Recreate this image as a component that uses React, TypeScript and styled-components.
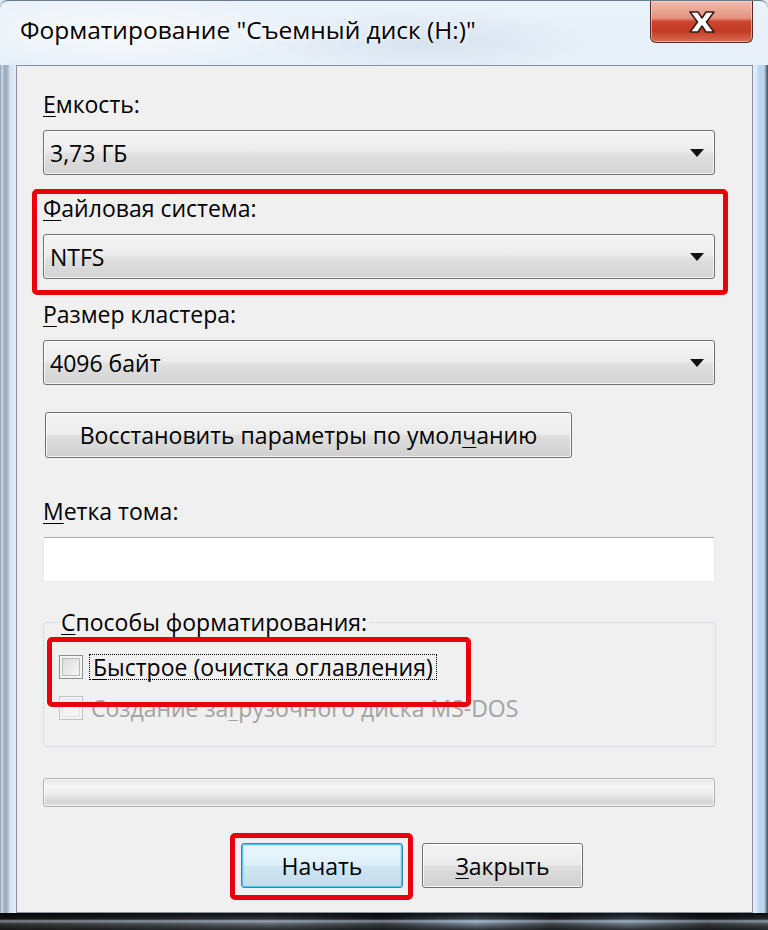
import React from "react";
import styled, { createGlobalStyle } from "styled-components";

const GlobalStyle = createGlobalStyle`
  html, body { margin: 0; padding: 0; background: #dbe7f3; }
  body { font-family: "Open Sans", "Noto Sans", sans-serif; }
  #root { width: 768px; height: 930px; }
`;

const Window = styled.div`
  width: 768px;
  height: 930px;
  box-sizing: border-box;
  display: flex;
  flex-direction: column;
  border-top: 1px solid #6a7a8a;
  border-radius: 8px 8px 0 0;
  overflow: hidden;
  background: linear-gradient(180deg, #e9f1f9 0%, #dde9f5 40%, #d2e1f0 100%);
  font-family: "Open Sans", "Noto Sans", sans-serif;
  color: #000;
`;

const TitleBar = styled.div`
  height: 64px;
  flex: none;
  display: flex;
  align-items: flex-start;
  justify-content: space-between;
  padding: 0 15px 0 20px;
  background:
    radial-gradient(ellipse 180px 40px at 120px 30px, rgba(255,255,255,0.7), rgba(255,255,255,0) 100%),
    radial-gradient(ellipse 160px 30px at 430px 40px, rgba(180,200,220,0.35), rgba(180,200,220,0) 100%);
`;

const Title = styled.div`
  font-size: 24.5px;
  line-height: 28px;
  margin-top: 15px;
  white-space: nowrap;
  text-shadow: 0 0 8px rgba(255,255,255,0.95), 0 0 3px rgba(255,255,255,0.9);
`;

const CloseButton = styled.div`
  width: 103px;
  height: 42px;
  box-sizing: border-box;
  border: 1px solid #5a2a22;
  border-top: none;
  border-radius: 0 0 6px 6px;
  background: linear-gradient(180deg, #f0bcaf 0%, #e3927e 42%, #cc462f 50%, #c23a24 72%, #d96c52 100%);
  box-shadow: inset 0 0 0 1px rgba(255, 220, 210, 0.55);
  display: flex;
  align-items: center;
  justify-content: center;
`;

const Middle = styled.div`
  flex: 1;
  display: flex;
  min-height: 0;
`;

const LeftFrame = styled.div`
  width: 16px;
  flex: none;
  background: linear-gradient(90deg, #6f7e8d 0, #c9d7e4 1px, #b8c7d6 3px, #95a8bb 5px, #a9bccd 8px, #d6e3f0 10px, #e3edf7 100%);
`;

const RightFrame = styled.div`
  width: 15px;
  flex: none;
  background: linear-gradient(90deg, #e7eff8 0, #d8e7f5 4px, #b8d4ee 6px, #bad6f0 11px, #7d8fa0 13px, #3f4a55 15px);
`;

const Client = styled.div`
  flex: 1;
  box-sizing: border-box;
  border: 1px solid #8593a2;
  background: #f0f0f0;
  padding: 25px 37px 0 26px;
  display: flex;
  flex-direction: column;
  align-items: stretch;
`;

const BottomFrame = styled.div`
  height: 17px;
  flex: none;
  background:
    linear-gradient(180deg, rgba(0,0,0,0.85) 0, rgba(0,0,0,0.55) 6px, rgba(200,215,230,0.55) 8px, rgba(60,60,60,0.3) 11px, rgba(20,20,20,0.8) 17px),
    linear-gradient(90deg, #2a2a2a 0, #4a4f55 20%, #6b7783 35%, #30343a 50%, #8aa2b8 62%, #3a4048 72%, #7c90a3 82%, #2b2e33 92%, #50585f 100%);
`;

const Label = styled.div<{ $mt?: number }>`
  height: 26px;
  font-size: 23px;
  line-height: 26px;
  margin-top: ${(p) => p.$mt ?? 0}px;
  white-space: nowrap;
`;

const Mn = styled.span`
  text-decoration: underline;
  text-decoration-thickness: 1px;
  text-underline-offset: 3px;
`;

const Combo = styled.div<{ $mt?: number }>`
  height: 45px;
  box-sizing: border-box;
  margin-top: ${(p) => p.$mt ?? 13}px;
  border: 1px solid #707070;
  border-radius: 3px;
  background: linear-gradient(180deg, #f4f4f4 0%, #ededed 46%, #e0e0e0 54%, #d2d2d2 100%);
  box-shadow: inset 0 0 0 1px rgba(255, 255, 255, 0.75);
  display: flex;
  align-items: center;
  justify-content: space-between;
  padding: 0 10px 0 6px;
  font-size: 23px;
`;

const Highlight = styled.div<{ $m: string; $p: string }>`
  position: relative;
  z-index: 1;
  border: 5px solid #e8000a;
  border-radius: 5px;
  margin: ${(p) => p.$m};
  padding: ${(p) => p.$p};
  display: flex;
  flex-direction: column;
`;

const Button = styled.div<{ $primary?: boolean }>`
  height: 46px;
  box-sizing: border-box;
  border: 1px solid ${(p) => (p.$primary ? "#3c7fb1" : "#707070")};
  border-radius: 3px;
  background: ${(p) =>
    p.$primary
      ? "linear-gradient(180deg, #eaf6fd 0%, #dff0f9 48%, #cfe6f2 52%, #c3ddec 100%)"
      : "linear-gradient(180deg, #f3f3f3 0%, #ececec 48%, #dedede 52%, #d0d0d0 100%)"};
  box-shadow: ${(p) =>
    p.$primary
      ? "inset 0 0 0 1px #57c8f2, inset 0 0 0 2px rgba(150,220,250,0.6)"
      : "inset 0 0 0 1px rgba(255,255,255,0.8)"};
  display: flex;
  align-items: center;
  justify-content: center;
  font-size: 23px;
  white-space: nowrap;
`;

const RestoreButton = styled(Button)`
  width: 527px;
  margin: 27px 0 0 2px;
`;

const TextInput = styled.div`
  height: 45px;
  margin-top: 13px;
  box-sizing: border-box;
  background: #fff;
  border: 1px solid #e3e9ef;
  border-top-color: #abadb3;
  border-radius: 2px;
`;

const Group = styled.fieldset`
  margin: 27px -1px 0 0;
  padding: 19px 0 25px 15px;
  min-width: 0;
  border: 1px solid #d5dfe5;
  border-radius: 3px;
  display: flex;
  flex-direction: column;
  align-items: flex-start;
`;

const Legend = styled.legend`
  padding: 0 2px;
  font-size: 23px;
  line-height: 26px;
  height: 26px;
`;

const CheckRow = styled.div<{ $disabled?: boolean }>`
  height: 26px;
  display: flex;
  align-items: center;
  font-size: 23px;
  color: ${(p) => (p.$disabled ? "#a3a3a3" : "#000")};
  white-space: nowrap;
`;

const Box = styled.div<{ $disabled?: boolean }>`
  width: 24px;
  height: 24px;
  box-sizing: border-box;
  flex: none;
  border: 1px solid ${(p) => (p.$disabled ? "#c4c4c4" : "#8e8f8f")};
  background: ${(p) =>
    p.$disabled ? "#f4f4f4" : "linear-gradient(135deg, #d5d5d5 0%, #e9e9e9 50%, #fafafa 100%)"};
  box-shadow: inset 0 0 0 2px #f4f4f4,
    inset 0 0 0 3px ${(p) => (p.$disabled ? "#e2e2e2" : "#b9b9b9")};
`;

const CheckText = styled.span<{ $focus?: boolean }>`
  margin-left: ${(p) => (p.$focus ? 7 : 5)}px;
  padding: 0 3px;
  line-height: 24px;
  outline: ${(p) => (p.$focus ? "1px dotted #000" : "none")};
`;

const Progress = styled.div`
  height: 29px;
  margin-top: 31px;
  box-sizing: border-box;
  border: 1px solid #b2b2b2;
  border-radius: 3px;
  background: linear-gradient(180deg, #e4e4e4 0%, #f6f6f6 25%, #ececec 55%, #d6d6d6 85%, #e2e2e2 100%);
  box-shadow: inset 0 0 0 1px rgba(255,255,255,0.6);
`;

const ButtonRow = styled.div`
  margin-top: 36px;
  padding-left: 198px;
  display: flex;
  align-items: center;
  gap: 19px;
`;

const DialogButton = styled(Button)<{ $w: number }>`
  width: ${(p) => p.$w}px;
  height: 45px;
`;

const Arrow = () => (
  <svg width="14" height="8" viewBox="0 0 14 8">
    <polygon points="0,0 14,0 7,8" fill="#111" />
  </svg>
);

const CloseIcon = () => (
  <svg width="30" height="24" viewBox="0 0 30 24">
    <path
      d="M3 2 H11 L15 8 L19 2 H27 L19.5 12 L27 22 H19 L15 16 L11 22 H3 L10.5 12 Z"
      fill="#fff"
      stroke="#3d1a12"
      strokeWidth="1.6"
      strokeLinejoin="round"
    />
  </svg>
);

export default function App() {
  return (
    <>
      <GlobalStyle />
      <Window>
        <TitleBar>
          <Title>Форматирование "Съемный диск (H:)"</Title>
          <CloseButton>
            <CloseIcon />
          </CloseButton>
        </TitleBar>
        <Middle>
          <LeftFrame />
          <Client>
            <Label>
              <Mn>Е</Mn>мкость:
            </Label>
            <Combo>
              <span>3,73 ГБ</span>
              <Arrow />
            </Combo>

            <Highlight $m="14px -13px 0 -11px" $p="1px 8px 11px 6px">
              <Label>
                <Mn>Ф</Mn>айловая система:
              </Label>
              <Combo>
                <span>NTFS</span>
                <Arrow />
              </Combo>
            </Highlight>

            <Label $mt={6}>
              <Mn>Р</Mn>азмер кластера:
            </Label>
            <Combo>
              <span>4096 байт</span>
              <Arrow />
            </Combo>

            <RestoreButton>
              Восстановить параметры по умол<Mn>ч</Mn>анию
            </RestoreButton>

            <Label $mt={40}>
              <Mn>М</Mn>етка тома:
            </Label>
            <TextInput />

            <Group>
              <Legend>
                <Mn>С</Mn>пособы форматирования:
              </Legend>
              <Highlight $m="-17px 0 -12px -12px" $p="12px 30px 22px 7px">
                <CheckRow>
                  <Box />
                  <CheckText $focus>
                    <Mn>Б</Mn>ыстрое (очистка оглавления)
                  </CheckText>
                </CheckRow>
              </Highlight>
              <CheckRow $disabled>
                <Box $disabled />
                <CheckText>
                  Создание за<Mn>г</Mn>рузочного диска MS-DOS
                </CheckText>
              </CheckRow>
            </Group>

            <Progress />

            <ButtonRow>
              <Highlight $m="-10px -10px -12px -11px" $p="5px 5px 7px 6px">
                <DialogButton $primary $w={162}>
                  Начать
                </DialogButton>
              </Highlight>
              <DialogButton $w={161}>
                <span>
                  <Mn>З</Mn>акрыть
                </span>
              </DialogButton>
            </ButtonRow>
          </Client>
          <RightFrame />
        </Middle>
        <BottomFrame />
      </Window>
    </>
  );
}
